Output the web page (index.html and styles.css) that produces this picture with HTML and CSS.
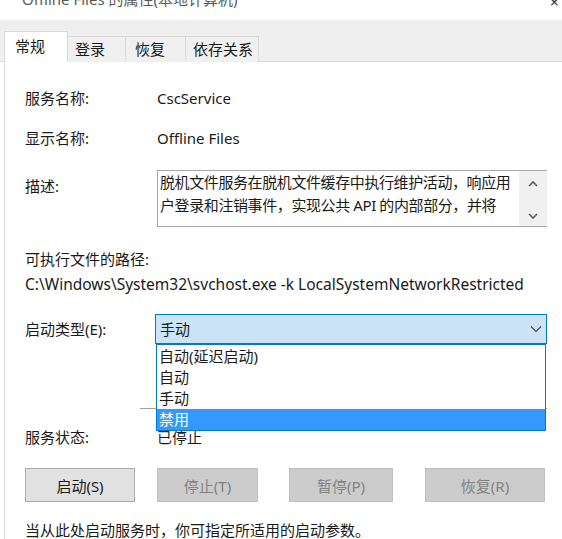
FILE: index.html
```html
<!DOCTYPE html>
<html lang="zh-CN">
<head>
    <meta charset="UTF-8">
    <meta name="viewport" content="width=device-width, initial-scale=1.0">
    <title>Offline Files 的属性(本地计算机)</title>
    <link rel="stylesheet" href="styles.css">
</head>
<body>
    <div class="titlebar">
        <span class="title">Offline Files 的属性(本地计算机)</span>
        <span class="close">×</span>
    </div>

    <div class="tabs">
        <div class="tab active">常规</div>
        <div class="tab">登录</div>
        <div class="tab">恢复</div>
        <div class="tab">依存关系</div>
    </div>

    <div class="panel">
        <div class="row first">
            <div class="label">服务名称:</div>
            <div class="value">CscService</div>
        </div>
        <div class="row">
            <div class="label">显示名称:</div>
            <div class="value">Offline Files</div>
        </div>
        <div class="row desc-row">
            <div class="label desc-label">描述:</div>
            <div class="desc">
                <div class="desc-text">脱机文件服务在脱机文件缓存中执行维护活动，响应用户登录和注销事件，实现公共 API 的内部部分，并将</div>
                <div class="scrollbar">
                    <svg width="10" height="8" viewBox="0 0 10 8"><path d="M1 6 L5 2 L9 6" fill="none" stroke="#606060" stroke-width="1.6"/></svg>
                    <svg width="10" height="8" viewBox="0 0 10 8"><path d="M1 2 L5 6 L9 2" fill="none" stroke="#606060" stroke-width="1.6"/></svg>
                </div>
            </div>
        </div>

        <div class="path-label">可执行文件的路径:</div>
        <div class="path">C:\Windows\System32\svchost.exe -k LocalSystemNetworkRestricted</div>

        <div class="row startup-row">
            <div class="label">启动类型(E):</div>
            <div class="combo">
                <div class="select">
                    <span>手动</span>
                    <svg width="12" height="8" viewBox="0 0 12 8"><path d="M1 1.5 L6 6.5 L11 1.5" fill="none" stroke="#444" stroke-width="1.1"/></svg>
                </div>
                <ul class="options">
                    <li>自动(延迟启动)</li>
                    <li>自动</li>
                    <li>手动</li>
                    <li class="selected">禁用</li>
                </ul>
            </div>
        </div>

        <div class="separator"></div>

        <div class="row status-row">
            <div class="label">服务状态:</div>
            <div class="value">已停止</div>
        </div>

        <div class="buttons">
            <button class="btn btn-start">启动(S)</button>
            <button class="btn btn-stop" disabled>停止(T)</button>
            <button class="btn btn-pause" disabled>暂停(P)</button>
            <button class="btn btn-resume" disabled>恢复(R)</button>
        </div>

        <div class="hint">当从此处启动服务时，你可指定所适用的启动参数。</div>
    </div>
</body>
</html>
```

FILE: styles.css
```css
body {
    margin: 0;
    width: 562px;
    height: 539px;
    overflow: hidden;
    background: #ffffff;
    font-family: "Noto Sans", "Noto Sans CJK SC", sans-serif;
    font-size: 15px;
    color: #1a1a1a;
}

.titlebar {
    height: 20px;
    position: relative;
    overflow: hidden;
}

.title {
    display: block;
    margin-top: -11px;
    padding-left: 22px;
    font-size: 15px;
    line-height: 20px;
    color: #5a5a5a;
    white-space: nowrap;
}

.close {
    position: absolute;
    right: 3px;
    top: -6px;
    font-size: 16px;
    line-height: 16px;
    color: #333;
}

.tabs {
    height: 41px;
    background: #efefef;
    border-bottom: 1px solid #dadada;
    display: flex;
    align-items: flex-end;
    padding-left: 4px;
}

.tab {
    height: 26px;
    line-height: 24px;
    padding: 0 0 0 7px;
    border: 1px solid #d9d9d9;
    border-bottom: none;
    border-left: none;
    background: #f0f0f0;
    margin-bottom: -1px;
    box-sizing: border-box;
    white-space: nowrap;
}

.tab:nth-child(2) { width: 58px; }
.tab:nth-child(3) { width: 60px; padding-left: 9px; }
.tab:nth-child(4) { width: 73px; }

.tab.active {
    width: 64px;
    height: 31px;
    line-height: 28px;
    padding-left: 10px;
    background: #ffffff;
    border-left: 1px solid #d9d9d9;
    border-bottom: 1px solid #ffffff;
    position: relative;
}

.panel {
    margin-left: 4px;
    border-left: 1px solid #d9d9d9;
    padding: 0 15px 0 20px;
    height: 477px;
    overflow: hidden;
}

.row {
    display: flex;
    align-items: center;
    line-height: 20px;
    margin-top: 20px;
}

.row.first {
    margin-top: 26px;
}

.label {
    width: 132px;
    flex-shrink: 0;
}

.desc-row {
    margin-top: 22px;
    align-items: flex-start;
}

.desc-label {
    padding-top: 6px;
}

.desc {
    width: 391px;
    height: 57px;
    box-sizing: border-box;
    border: 1px solid #a9a9a9;
    border-right: none;
    display: flex;
}

.desc-text {
    flex: 1;
    margin: 0 0 0 2px;
    height: 46px;
    line-height: 23px;
    letter-spacing: -0.4px;
    overflow: hidden;
}

.scrollbar {
    width: 28px;
    background: #f0f0f0;
    display: flex;
    flex-direction: column;
    justify-content: space-between;
    align-items: center;
    padding: 9px 0 6px;
}

.path-label {
    margin-top: 22px;
    line-height: 20px;
}

.path {
    margin-top: 5px;
    line-height: 20px;
    font-size: 15.5px;
    white-space: nowrap;
}

.startup-row {
    margin-top: 20px;
}

.combo {
    position: relative;
    width: 392px;
    margin-left: -2px;
}

.select {
    height: 30px;
    box-sizing: border-box;
    border: 1px solid #0078d7;
    background: #cce4f7;
    display: flex;
    align-items: center;
    justify-content: space-between;
    padding: 0 4px 0 4px;
}

.options {
    position: absolute;
    top: 30px;
    left: 1px;
    width: 390px;
    margin: 0;
    padding: 1px 0 0;
    list-style: none;
    background: #ffffff;
    border: 1px solid #0078d7;
    box-sizing: border-box;
    z-index: 2;
}

.options li {
    height: 21px;
    line-height: 21px;
    padding-left: 2px;
}

.options li.selected {
    background: #3399ff;
    color: #ffffff;
}

.separator {
    height: 1px;
    background: #a0a0a0;
    margin: 64px 0 0 115px;
    width: 407px;
}

.status-row {
    margin-top: 18px;
}

.buttons {
    display: flex;
    margin-top: 21px;
}

.btn {
    height: 34px;
    font-family: inherit;
    font-size: 15px;
    box-sizing: border-box;
    border: 1px solid #adadad;
    background: #e1e1e1;
    color: #1a1a1a;
    padding: 0;
}

.btn:disabled {
    background: #cccccc;
    border-color: #bfbfbf;
    color: #838383;
}

.btn-start { width: 110px; }
.btn-stop { width: 101px; margin-left: 22px; }
.btn-pause { width: 104px; margin-left: 31px; }
.btn-resume { width: 120px; margin-left: 32px; }

.hint {
    margin-top: 18px;
    line-height: 20px;
    white-space: nowrap;
}
```
